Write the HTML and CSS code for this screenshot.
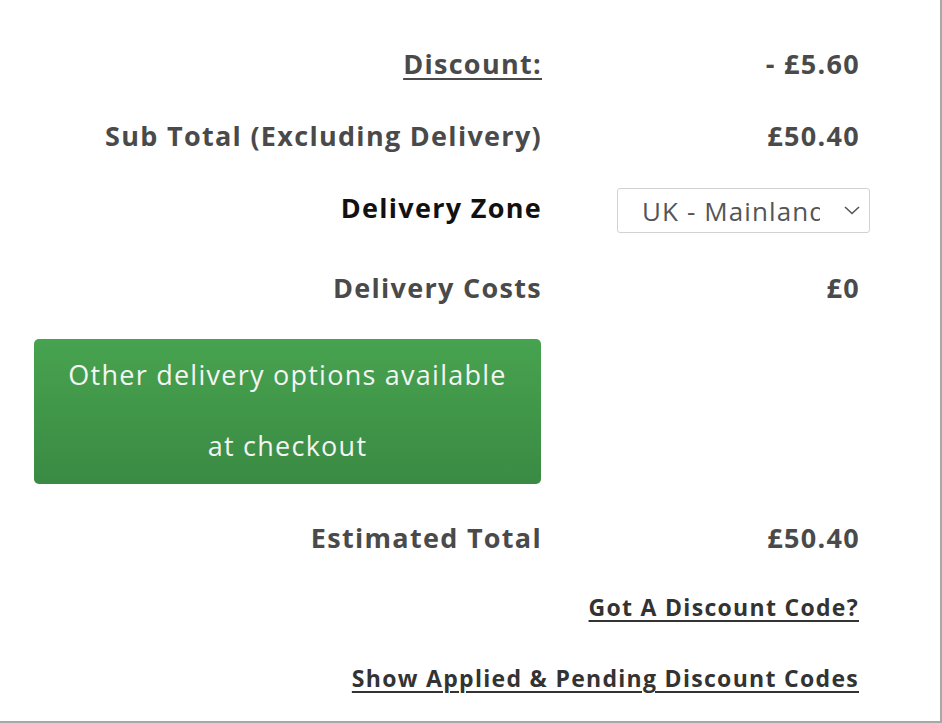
FILE: index.html
```html
<!DOCTYPE html>
<html lang="en">
<head>
<meta charset="utf-8">
<title>Basket totals</title>
<link rel="stylesheet" href="styles.css">
</head>
<body>
<div class="frame">
  <div class="totals">
    <div class="row r1">
      <div class="label"><span class="u">Discount:</span></div>
      <div class="value">- £5.60</div>
    </div>
    <div class="row r2">
      <div class="label">Sub Total (Excluding Delivery)</div>
      <div class="value">£50.40</div>
    </div>
    <div class="row r3">
      <div class="label dark">Delivery Zone</div>
      <div class="value">
        <div class="select">
          <span class="select-text">UK - Mainland</span>
          <svg class="chev" width="16" height="9" viewBox="0 0 16 9"><path d="M1 1 L8 7.5 L15 1" fill="none" stroke="#555" stroke-width="1.6"/></svg>
        </div>
      </div>
    </div>
    <div class="row r4">
      <div class="label">Delivery Costs</div>
      <div class="value">£0</div>
    </div>
    <div class="row rbtn">
      <div class="btn">Other delivery options available<br>at checkout</div>
    </div>
    <div class="row r5">
      <div class="label">Estimated Total</div>
      <div class="value">£50.40</div>
    </div>
    <div class="links">
      <a class="link l1" href="#">Got A Discount Code?</a>
      <a class="link l2" href="#">Show Applied &amp; Pending Discount Codes</a>
    </div>
  </div>
</div>
</body>
</html>
```
FILE: styles.css
```css
html, body {
  margin: 0;
  padding: 0;
  background: #fff;
}
body {
  font-family: "Open Sans", "Liberation Sans", sans-serif;
}
.frame {
  width: 940px;
  height: 721px;
  border-right: 2px solid #a8a8a8;
  border-bottom: 2px solid #a8a8a8;
  overflow: hidden;
}
.totals {
  padding-top: 27px;
}
.row {
  display: grid;
  grid-template-columns: 542px 318px;
  align-items: center;
  height: 72px;
}
.r4 { height: 88px; }
.rbtn { height: auto; margin-top: 8px; margin-bottom: 17px; }
.label, .value {
  font-size: 27px;
  letter-spacing: 1.3px;
  font-weight: 700;
  color: #4a4a4a;
  text-align: right;
  white-space: nowrap;
}
.label.dark { color: #111; }
.u { text-decoration: underline; text-underline-offset: 4px; text-decoration-thickness: 2px; }
.value {
  display: flex;
  justify-content: flex-end;
}
.select {
  width: 251px;
  height: 43px;
  border: 1px solid #d2d2d2;
  border-radius: 3px;
  margin-right: -10px;
  margin-top: 7px;
  display: flex;
  align-items: center;
  font-weight: 400;
  color: #555;
  font-size: 26px;
  letter-spacing: 1.1px;
}
.select-text {
  margin-left: 24px;
  width: 178px;
  overflow: hidden;
  white-space: nowrap;
}
.chev {
  margin-left: 24px;
}
.btn {
  margin-left: 34px;
  width: 507px;
  height: 145px;
  box-sizing: border-box;
  border-radius: 5px;
  background: linear-gradient(#47a34f, #3a8a43);
  color: #f4f4f4;
  font-size: 27px;
  letter-spacing: 1.25px;
  line-height: 71px;
  text-align: center;
  padding-top: 0;
}
.links {
  display: flex;
  flex-direction: column;
  align-items: flex-end;
  width: 859px;
}
.link {
  font-size: 23px;
  letter-spacing: 1.3px;
  font-weight: 700;
  color: #333;
  text-decoration: underline;
  text-underline-offset: 4px;
  text-decoration-thickness: 2px;
  line-height: 30px;
}
.l1 { margin-top: 19px; }
.l2 { margin-top: 41px; }
```
